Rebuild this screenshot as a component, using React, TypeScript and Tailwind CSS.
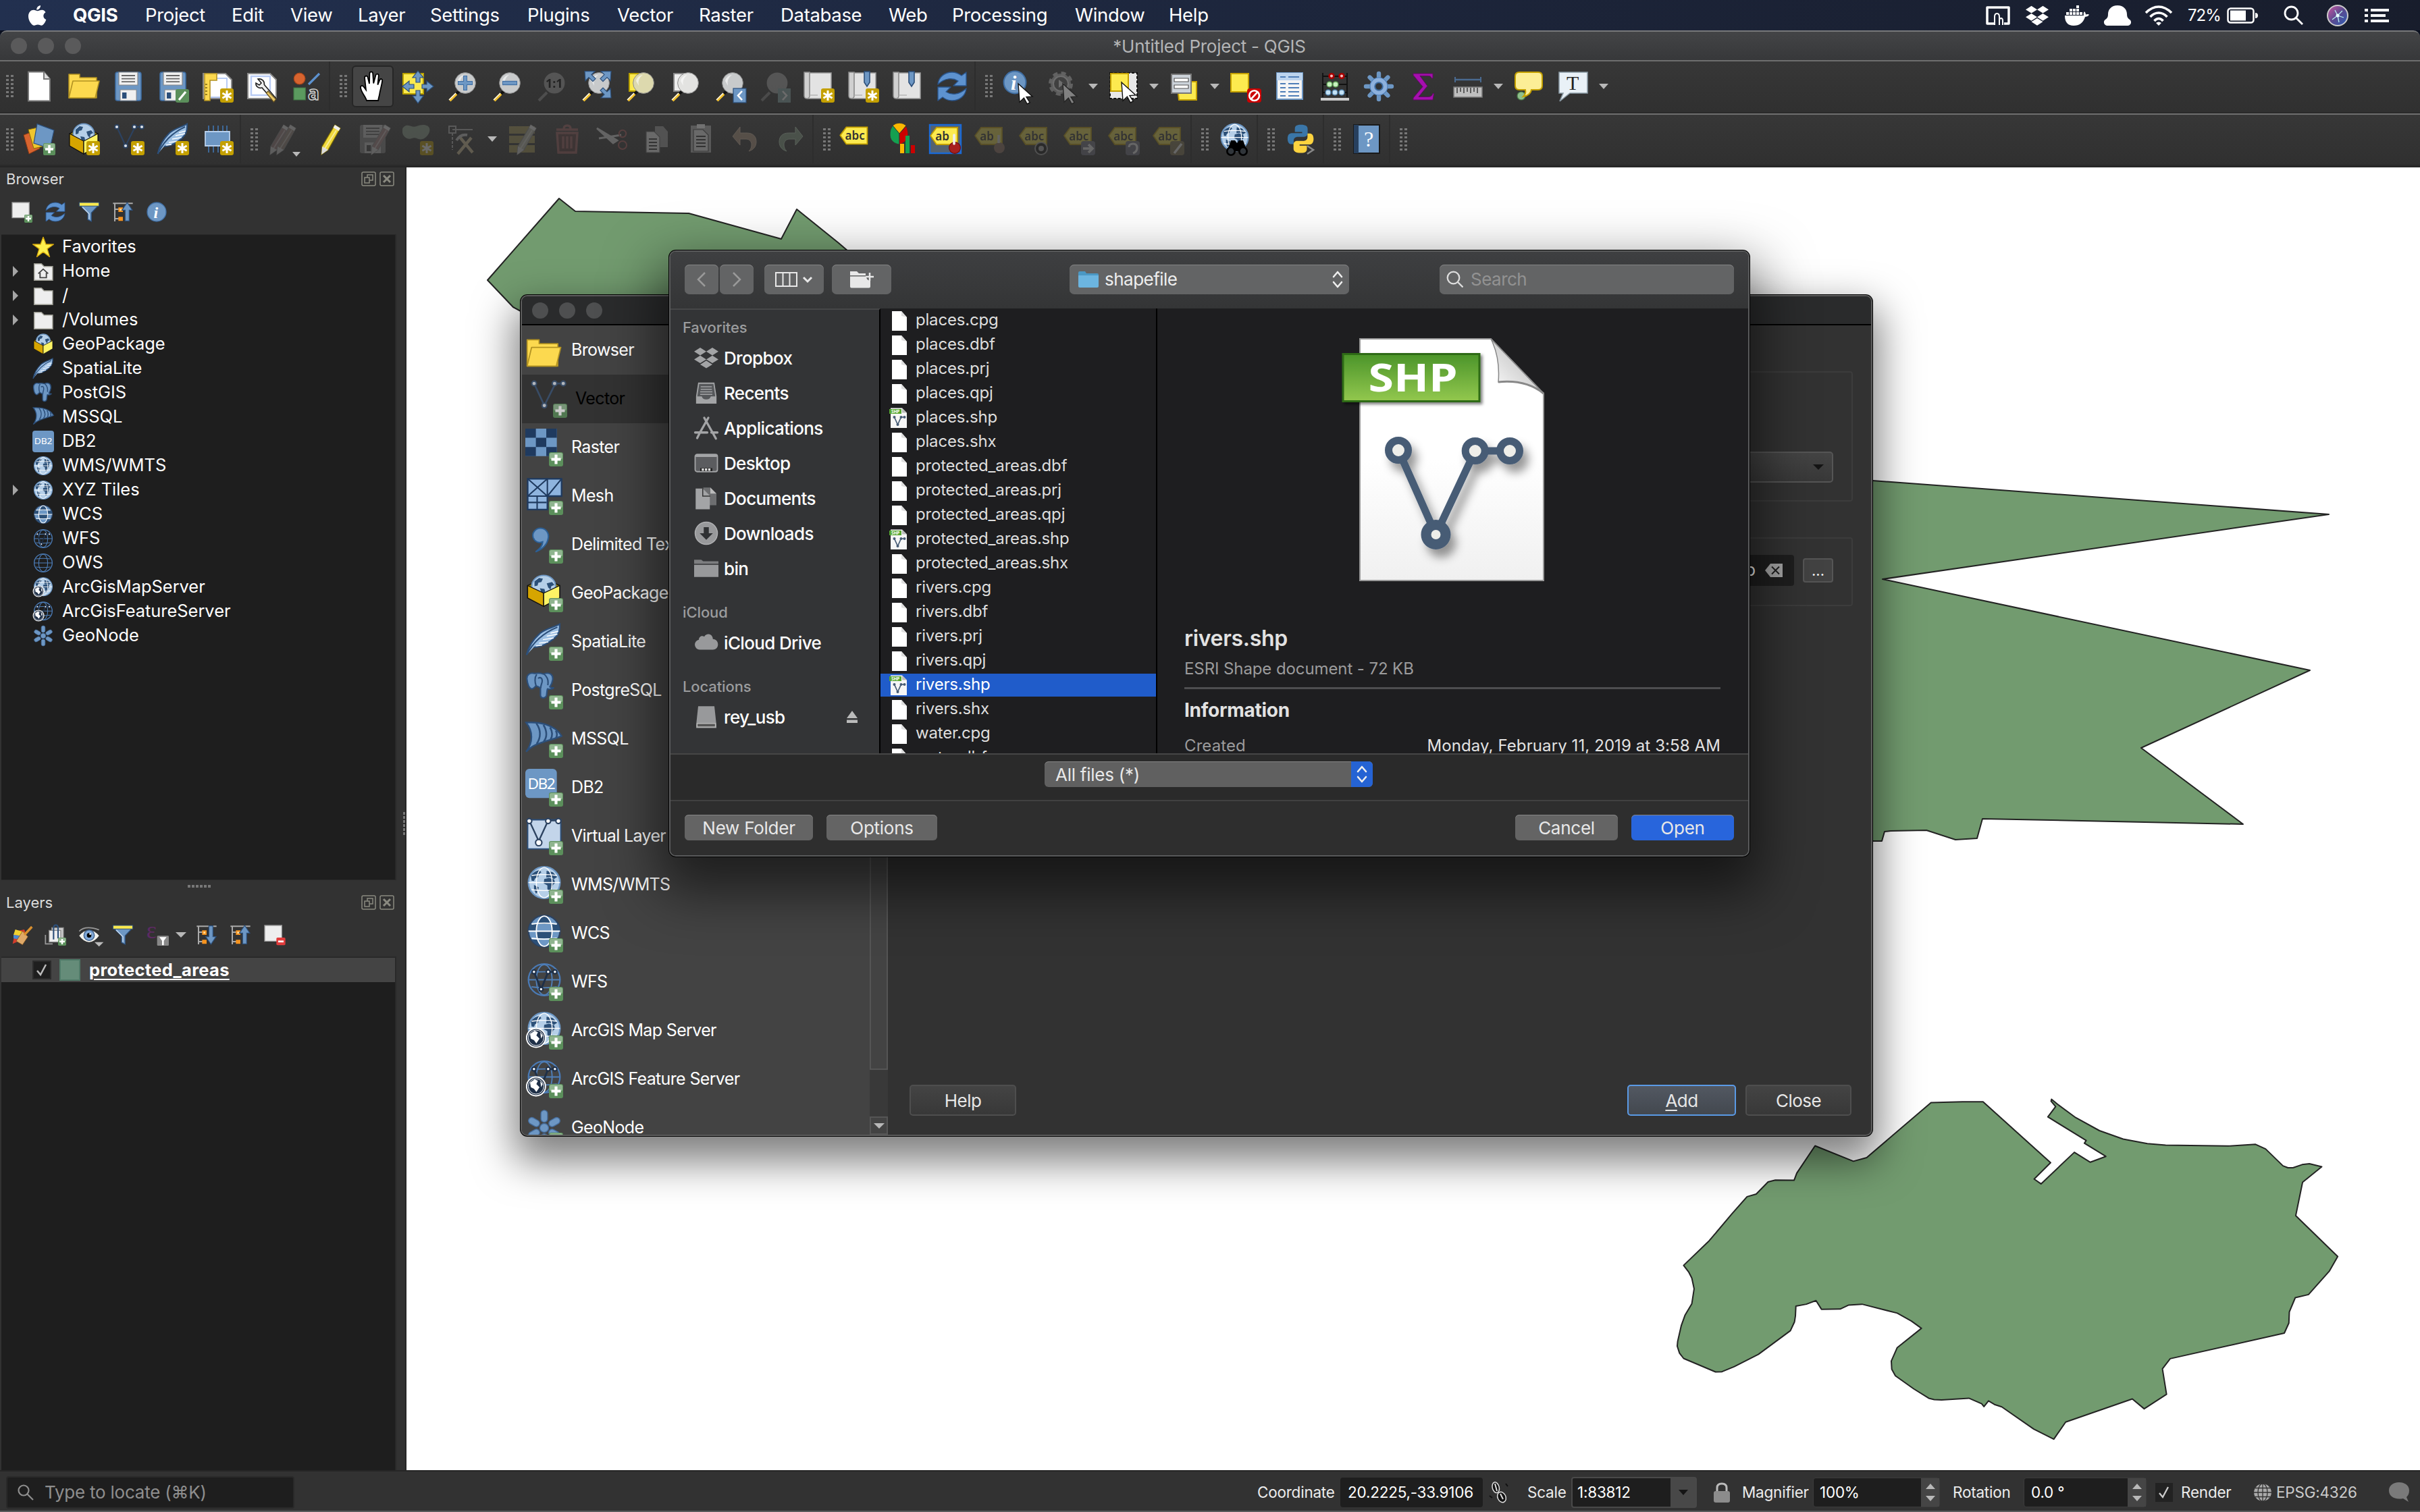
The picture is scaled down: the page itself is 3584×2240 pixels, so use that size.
import React from "react";

type P = { children?: React.ReactNode };

/* ---------- icon helpers ---------- */
const I = ({ children, c = "w-12 h-12", vb = "0 0 24 24" }: P & { c?: string; vb?: string }) => (
  <svg viewBox={vb} className={`shrink-0 overflow-visible ${c}`} fill="none">{children}</svg>
);
const Plus = () => (
  <g>
    <rect x="15" y="15" width="9" height="9" rx="1.3" fill="#5b8f5b" />
    <rect x="15.4" y="15.4" width="8.2" height="4" rx="1" fill="#8fb58f" />
    <path d="M19.5 16.5v6M16.5 19.5h6" stroke="#fff" strokeWidth="1.8" />
  </g>
);
const Star = () => (
  <g>
    <rect x="14" y="13.5" width="10" height="10.5" rx="1.6" fill="#c4a000" />
    <path d="M19 15v7.5M15.7 17l6.6 3.6M15.7 20.6l6.6-3.6" stroke="#fff" strokeWidth="1.5" />
  </g>
);
const Continents = () => (
  <g fill="#2c5078">
    <path d="M3.500 6c1.500-2 3.500-3 5.500-3.300l1.200 1.300-1.700 1.200-.3 1.800-2 .8-.7 1.700-1.500-.2z" />
    <path d="M12 8.300l3-.8 3.200 1 .8 2.200-1.500 1.300-1 3.500-1.300 1.500-1.200-2.500v-2.200l-2.300-1.300z" />
    <path d="M13.500 3l4 1 2.700 3-2 1.200-2.500-1.200-2.400.3z" />
    <path d="M5.500 12l3 1.500-.5 2.500-1.200 1.700-1.300-3z" />
  </g>
);
const GlobeG = ({ k = "wms" }: { k?: string }) => (
  <g>
    {k === "wms" && <><circle cx="12" cy="10.500" r="10" fill="#b5cfe8" stroke="#6d97c4" strokeWidth="1" /><Continents /></>}
    {k === "wcs" && (
      <>
        <circle cx="12" cy="10.500" r="10" fill="#6d97c4" stroke="#2c4260" strokeWidth="1" />
        <path d="M3 6a10 10 0 0 0-1 4.500h5.200q0-2.500.5-4.500zM16.300 6q.7 2 .7 4.500h5A10 10 0 0 0 21 6zM7.200 10.500h9.800q0 2.500-.7 4.500H7.800q-.6-2-.6-4.500zM4 16q3 4 6 4.300l-2.300-4.500zM20 16q-3 4-6 4.300l2.300-4.500z" fill="#2c5078" />
        <path d="M8 6q1.500-4.700 4-5 2.500.3 4 5z" fill="#2c5078" />
      </>
    )}
    {(k === "wfs" || k === "ows") && <circle cx="12" cy="10.500" r="10" stroke="#4a7ab5" strokeWidth="1" />}
    <g stroke={k === "wfs" || k === "ows" ? "#4f7fb8" : "#fff"} strokeWidth={k === "wms" ? ".6" : ".8"}>
      <ellipse cx="12" cy="10.500" rx="5" ry="9.600" />
      <path d="M2 10.500h20M4 6q8-1.200 16 0M4 15q8 1.200 16 0" />
    </g>
    {k === "wfs" && (
      <g>
        <path d="M5.500 5.500L10 16.500 14.500 5.500h4.300" stroke="#1f3048" strokeWidth="1.200" />
        <g fill="#fff" stroke="#1f3048" strokeWidth=".9"><circle cx="5.500" cy="5.500" r="1.200" /><circle cx="10" cy="16.500" r="1.200" /><circle cx="14.500" cy="5.500" r="1.200" /><circle cx="18.800" cy="5.500" r="1.200" /></g>
      </g>
    )}
  </g>
);
const ArcG = () => (
  <g>
    <circle cx="6.800" cy="16.500" r="6" fill="#1f3048" stroke="#fff" strokeWidth=".8" />
    <circle cx="6.800" cy="16.500" r="4.900" stroke="#fff" strokeWidth=".4" />
    <path d="M3 14l3-2 2 1-1 2 2 2-2 3-1.500-2-2-1zM9.500 13l1.500 2-1 2z" fill="#fff" />
  </g>
);
const GpkgG = () => (
  <g>
    <path d="M1.500 8L12 2.500 22.500 8v9L12 23 1.500 17z" fill="#8a7000" stroke="#111" strokeWidth=".6" />
    <circle cx="12" cy="8.500" r="7.800" fill="#b5cfe8" stroke="#6d97c4" strokeWidth=".9" />
    <path d="M6 5l3-2.500 2.500.5-1 2.500-2 .5-.5 2-2 .5zM14 6.500l3.500-1 1.500 2-2 1-.5 2.500-1.500-1.500zM9.500 10l3 .5.5 2-2 2z" fill="#2c5078" />
    <path d="M1.500 8L12 13.500V23L1.500 17z" fill="#d6a500" stroke="#111" strokeWidth=".6" />
    <path d="M22.500 8L12 13.500V23l10.500-6z" fill="#fcf465" stroke="#111" strokeWidth=".6" />
  </g>
);
const FeatherG = () => (
  <g>
    <path d="M.8 23C2 17 5 12 9.500 7.500 13.500 4 19 3 22.500.8c.3 4-.5 7.500-3.500 10.200-4 3.500-7.500 6-13.500 6.500" fill="#9dc0e4" stroke="#2c4f7a" strokeWidth="1" />
    <path d="M.8 23C5 14 12 7 21 3" stroke="#2c4f7a" strokeWidth="1" />
    <path d="M9 14.500l6-.8M11.500 12l7-1.200M14 9.500l7-1.500M16.500 7.300l5-1.300M7 16.500l4-.5" stroke="#fff" strokeWidth=".7" />
  </g>
);
const ElephantG = () => (
  <g fill="#6d97c4" stroke="#2c4f7a" strokeWidth="1.100" strokeLinejoin="round">
    <path d="M7 1.500C3.500.5 1 2.500 1.200 6c.3 3.500 1.500 7.500 3.300 8 1.300.4 2.500-1.500 3.500-2.500 1.500 1 2.800 1 3.300 2v6c.3 2.500 3.800 2.500 4.500 0 .4-2 .2-4 .8-5.500 1.500.5 3.500.2 4.500-.8-1 0-2.200-.1-2.800-.8C20.500 9 21.500 4 19 2c-2-1.300-4-.8-5.500 0-2-.8-4.500-.9-6.500-.5z" />
    <path d="M8 11.500C7 8 7 4.500 8.500 2.200M14 2c2 2 3.500 4 2.800 9M9.500 5.500c2-1.500 3.500 0 3 3-.3 1.500-1.200 3.500-.9 5" fill="none" />
  </g>
);
const SailG = () => (
  <g>
    <path d="M1 1.500c8-.5 18 1 22.500 8.500C17 13 7 13.500 1 20 5.500 14 5.500 7 1 1.500z" fill="#6d97c4" stroke="#2c4f7a" strokeWidth="1" />
    <path d="M7.500 2c3 4 3 9 .2 13M12 3c2.500 4 2.300 8 .2 10.500M16.200 4.500c1.700 3 1.700 5.500.3 7.800M19.800 6.700c1 1.500 1 3 .2 4.600" stroke="#2c4f7a" strokeWidth="1.100" />
  </g>
);
const VG = ({ s = "#2c4260" }: { s?: string }) => (
  <g>
    <path d="M3.500 3l6.500 14L17 3h5" stroke={s} strokeWidth="1.100" />
    <g fill="#dde3ea" stroke={s} strokeWidth=".9"><circle cx="3.500" cy="3" r="1.500" /><circle cx="10" cy="17" r="1.500" /><circle cx="16.500" cy="3" r="1.500" /><circle cx="22" cy="3" r="1.500" /></g>
  </g>
);
const NodeG = () => (
  <g stroke="#466d9c" strokeWidth=".6" fill="#6d97c4">
    {[0, 60, 120, 180, 240, 300].map((a) => (
      <rect key={a} x="9.900" y=".8" width="4.200" height="7.500" rx="2.100" transform={`rotate(${a} 12 12)`} />
    ))}
    <circle cx="12" cy="12" r="2.800" />
  </g>
);
const FolderY = () => (
  <g stroke="#b29222" strokeWidth=".8" fill="#fcd94f" strokeLinejoin="round">
    <path d="M1 20.500V3h8v2.500h12.500v15z" />
    <path d="M1 20.500L4 8h19.500l-3 12.500z" />
  </g>
);
const Lens = ({ f = "#c8cacb" }: { f?: string }) => (
  <g>
    <path d="M10 15.500l-2.500 2.500" stroke="#111" strokeWidth="2" />
    <path d="M8 17.500L3 22.500" stroke="#f2c12e" strokeWidth="2" />
    <path d="M7.500 17L2.500 22" stroke="#fff" strokeWidth=".6" />
    <circle cx="14.500" cy="9.500" r="7.700" fill={f} stroke="#8b8b8b" strokeWidth=".5" />
    <path d="M9 8a5.500 5.500 0 0 1 5-4.500 7 7 0 0 0-3 8z" fill="#fff" opacity=".6" />
  </g>
);
const Cursor = () => <path d="M12 10l10.500 9.500-4.500.3 2.600 4.200-2 1-2.400-4.400-3.200 3z" fill="#fff" stroke="#111" strokeWidth=".7" />;
const RefreshG = () => (
  <g fill="#5d92cf" stroke="#2a558c" strokeWidth=".7" strokeLinejoin="round">
    <path d="M1.500 10.500C2 5 6.500 1.500 12 1.500c3 0 5 1 7 2.500l3.500-2.500v10H13l3.500-3.500c-4-2.500-9.500-2.500-15 2.500z" />
    <path d="M22.500 13.500C22 19 17.500 22.500 12 22.500c-3 0-5-1-7-2.500l-3.500 2.500v-10H11l-3.500 3.500c4 2.500 9.500 2.500 15-2.500z" />
  </g>
);
const Roll = () => (
  <g>
    <path d="M4 2h17.500v19H4z" fill="#e3e3e3" stroke="#999" strokeWidth=".8" />
    <path d="M1.500 1.500h4V19a2 2 0 0 1-4 0z" fill="#d0d0d0" stroke="#8a8a8a" strokeWidth=".8" />
    <path d="M5.500 18.500h6" stroke="#aaa" strokeWidth=".6" />
  </g>
);
const Ribbon = () => <path d="M13 1h4v8l-2 3-2-3z" fill="#6d97c4" stroke="#2c4f7a" strokeWidth=".8" />;
const Tag = ({ t = "abc" }: { t?: string }) => (
  <g>
    <path d="M1 9.500L5.500 3.500H21v12.500H5.500z" fill="#fcea4f" stroke="#c4a000" strokeWidth=".9" />
    <text x="4.600" y="12.800" fontSize="8.500" fontFamily="Noto Sans" fontWeight="600" fill="#333">{t}</text>
  </g>
);
const Pencil = ({ x = 0, f = "#efd83b", s = "#7d6c00" }: { x?: number; f?: string; s?: string }) => (
  <g transform={`translate(${x} 0)`}>
    <path d="M15 1.500l4 2.500L10 20l-5 3.500.5-6z" fill={f} stroke={s} strokeWidth=".6" />
    <path d="M15 1.500l4 2.500-1.200 2-4-2.500z" fill="#eee" />
    <path d="M5.600 17.500L10 20l-5 3.500z" fill="#ddd" />
    <path d="M16 5.500L7.500 19" stroke="#fff" strokeWidth=".9" opacity=".5" />
  </g>
);
const Floppy = () => (
  <g>
    <rect x="2.500" y="1.500" width="19" height="21" rx="1.500" fill="#6d97c4" stroke="#3f6ea3" strokeWidth=".8" />
    <path d="M5 1.500h14v9.500H5z" fill="#f0f0f0" stroke="#888" strokeWidth=".6" />
    <path d="M7 4h10M7 6.300h10M7 8.600h10" stroke="#666" strokeWidth=".9" />
    <path d="M6 14.500h12v8H6z" fill="#f0f0f0" stroke="#888" strokeWidth=".5" />
    <path d="M7.500 16.500h3.200v4.500H7.500z" fill="#2c4f7a" />
  </g>
);
const FloppyGray = () => (
  <g>
    <rect x="2.500" y="1.500" width="19" height="21" rx="1.500" fill="#888" />
    <path d="M5 1.500h14v9.500H5z" fill="#ccc" />
    <path d="M7 4h10M7 6.300h10M7 8.600h10" stroke="#555" strokeWidth=".9" />
    <path d="M6 14.500h12v8H6z" fill="#ccc" />
    <path d="M7.500 16.500h3.200v4.500H7.500z" fill="#444" />
  </g>
);
const TreeG = ({ up }: { up?: boolean }) => (
  <g>
    <path d="M1 2.500h22M3 2.500v20M3 9h6M3 19.500h6" stroke="#aaa" strokeWidth="1.500" />
    <path d="M7 7h5v5H7zM7 17.500h5v4.500H7z" fill="#f7931e" />
    <path d="M8.500 8.500h2v2h-2z" fill="#ffe0a0" />
    {up
      ? <path d="M14.500 22V10H11l5.800-8.500L22.500 10H19v12z" fill="#6d97c4" stroke="#2c4f7a" strokeWidth=".9" />
      : <path d="M14.500 2v12H11l5.800 8.500L22.500 14H19V2z" fill="#6d97c4" stroke="#2c4f7a" strokeWidth=".9" />}
  </g>
);
const FunnelG = () => (
  <g>
    <path d="M1.500 4.500h21L14.500 13v9.500l-4-2V13z" fill="#6d97c4" stroke="#2c4f7a" strokeWidth=".9" />
    <path d="M1 1.500h22v4H1z" fill="#fcea4f" stroke="#2c4f7a" strokeWidth=".8" />
    <path d="M4.500 6.500L12 14v6" stroke="#cfe0f3" strokeWidth="1" />
  </g>
);
const InfoG = () => (
  <g>
    <circle cx="12" cy="12" r="10.500" fill="#6d97c4" stroke="#3f6ea3" />
    <text x="8.700" y="18.500" fontSize="18" fontFamily="Liberation Serif" fontWeight="700" fontStyle="italic" fill="#fff">i</text>
  </g>
);
const DropboxG = ({ f }: { f: string }) => (
  <path fill={f} d="M6 2l6 3.800-6 3.800-6-3.800zM18 2l6 3.800-6 3.800-6-3.800zM6 9.800l6 3.800-6 3.800-6-3.800zM18 9.800l6 3.800-6 3.800-6-3.800zM12 14.800l6 3.800-6 3.800-6-3.800z" />
);

const icons: Record<string, React.ReactNode> = {
  new: <><path d="M4 1.300h11.500L20 6.500v16.200H4z" fill="#fff" stroke="#777" strokeWidth="1" /><path d="M15.500 1.300V6.500H20" fill="#ddd" stroke="#777" /></>,
  open: <FolderY />,
  save: <Floppy />,
  saveas: <><Floppy /><rect x="14" y="14" width="10" height="10" rx="1.500" fill="#5b8f5b" /><path d="M21.500 16l-5 6" stroke="#fff" strokeWidth="1.600" /></>,
  layout: <><path d="M1.500 2.500H18l4.500 4.500v14H1.500z" fill="#fff" stroke="#888" /><path d="M5 6h14v14H7" stroke="#b9ccf5" /><path d="M2.500 2.500h9v5h-5v15h-4z" fill="#fcd94f" stroke="#b29222" strokeWidth=".8" /><path d="M3 10.500h1.500M3 13h1.500M3 15.500h1.500M3 18h1.500" stroke="#7a6410" strokeWidth=".8" /><Star /></>,
  layoutmgr: <><path d="M1.500 2.500H18l4.500 4.500v14H1.500z" fill="#fff" stroke="#888" /><path d="M4 4.500h14v14H4z" stroke="#b9ccf5" strokeWidth="1.200" /><path d="M9 6.500c3-.5 5 1.500 4.700 4.200L22.500 21l-1.800 2L12 13c-2.500.8-4.800-1-4.500-3.500l2.500 1.500 1.500-1.500z" fill="#eee" stroke="#222" strokeWidth=".8" /><path d="M16.500 15.500l5.800 6-1.600 2-5.500-6.500z" fill="#e8c766" stroke="#6b5520" strokeWidth=".6" /></>,
  style: <><circle cx="6.800" cy="6.300" r="4.200" fill="#d7642f" stroke="#a3441a" strokeWidth=".6" /><path d="M21.500 2.500l-8 8" stroke="#5d92cf" strokeWidth="1.600" /><path d="M2.500 13h8.700v9H2.500z" fill="#5b9a5f" stroke="#3f7343" strokeWidth=".6" /><text x="13" y="21.800" fontSize="14" fontFamily="Noto Sans" fontWeight="700" fill="#222" stroke="#ccc" strokeWidth=".8">a</text></>,
  hand: <path d="M7.500 22.500C6.500 19 3 16 3 12.500c0-1.300 1.800-1.300 2.500 0l1.500 2L6 5.500c0-1.500 2-1.700 2.300-.3L9.500 10l.2-7.500c.1-1.700 2.300-1.700 2.400 0l.5 7.200 1.600-6c.4-1.400 2.300-1.100 2.200.4l-.7 6.700 1.500-3.600c.6-1.200 2.100-.7 1.900.6-.5 4-1.600 6.700-2 9.700-.3 2-1 3.500-1 5z" fill="#fff" stroke="#000" strokeWidth=".9" />,
  pan: <><path d="M1.500 2.500h15v15h-15z" fill="#fcea4f" stroke="#b8a000" /><g fill="#6d97c4" stroke="#2c4f7a" strokeWidth=".6"><path d="M12.500.5l4 5h-2.500V9h-3V5.500H8.500zM12.500 24.500l4-5.500h-2.500V15h-3v4H8.500zM1 12l5-4v2.500h3.500v3H6V16zM24 12l-5-4v2.500h-3.500v3H19V16z" /></g></>,
  zin: <><Lens /><path d="M14.500 4v11M9 9.500h11" stroke="#3f6ea3" strokeWidth="3" /><path d="M14.500 4.500v10M9.500 9.500h10" stroke="#6d97c4" strokeWidth="2" /></>,
  zout: <><Lens /><path d="M9 9.500h11" stroke="#3f6ea3" strokeWidth="3.200" /><path d="M9.500 9.500h10" stroke="#6d97c4" strokeWidth="2" /></>,
  z11: <g opacity=".32"><path d="M9 16.500L3 22.500" stroke="#888" strokeWidth="2" /><circle cx="14.500" cy="9.500" r="7.700" fill="#999" /><text x="8" y="13" fontSize="9" fontFamily="Noto Sans" fontWeight="700" fill="#000">1:1</text></g>,
  zfull: <><Lens /><g fill="#6d97c4" stroke="#2c4f7a" strokeWidth=".6"><path d="M4 .8h7.500L9 3.300l3 3-2 2-3-3-2.500 2.500zM23.500.8H16l2.500 2.500-3 3 2 2 3-3 2.500 2.500zM23.500 20.500H16L18.500 18l-3-3 2-2 3 3 2.500-2.500z" /></g></>,
  zsel: <><path d="M4 2.500h13v13H4z" fill="#fcea4f" stroke="#b8a000" /><Lens f="#ddd9ae" /></>,
  zlay: <><path d="M4 2.500h13v13H4z" fill="#eee" stroke="#888" /><Lens f="#e3e3e1" /></>,
  zlast: <><Lens /><rect x="15" y="13.500" width="9.500" height="10.500" fill="#6d97c4" stroke="#2c4f7a" strokeWidth=".6" /><path d="M21.500 15.500l-3 3.300 3 3.300" stroke="#fff" strokeWidth="1.300" /></>,
  znext: <g opacity=".28"><path d="M9 16.500L3 22.500" stroke="#888" strokeWidth="2" /><circle cx="14.500" cy="9.500" r="7.700" fill="#aaa" /><rect x="15" y="13.500" width="9.500" height="10.500" fill="#8aa" /><path d="M18.500 15.500l3 3.300-3 3.300" stroke="#fff" strokeWidth="1.300" /></g>,
  mapnew: <><Roll /><Star /></>,
  bmnew: <><Roll /><Ribbon /><Star /></>,
  bm: <><Roll /><Ribbon /></>,
  refresh: <RefreshG />,
  identify: <><circle cx="9.500" cy="9" r="8.200" fill="#6d97c4" stroke="#3f6ea3" /><text x="6.500" y="14.500" fontSize="15" fontFamily="Liberation Serif" fontWeight="700" fontStyle="italic" fill="#fff">i</text><Cursor /></>,
  action: <g opacity=".38"><circle cx="10.500" cy="10" r="7.500" fill="#999" stroke="#aaa" strokeWidth="3" strokeDasharray="3.300 2.600" /><circle cx="10.500" cy="10" r="5.500" fill="#555" stroke="#ccc" /><path d="M9 7l4 3-4 3z" fill="#ccc" /><Cursor /></g>,
  select: <><path d="M2 2h20v19H2z" fill="#e8e8e8" stroke="#111" strokeDasharray="2 1.200" /><path d="M2.500 2.500h13v13h-13z" fill="#fcea4f" stroke="#c4a000" /><g transform="translate(-1.500 -1)"><Cursor /></g></>,
  form: <><path d="M6.500 8.500H21v13.500H8z" fill="#fcea4f" stroke="#c4a000" /><path d="M2.500 3h14.500v14H2.500z" fill="#ccd3da" stroke="#777" /><path d="M4.500 6h10.500v2.500H4.500zM4.500 11h10.500v2.500H4.500z" fill="#fff" stroke="#555" strokeWidth=".6" /></>,
  desel: <><path d="M1.500 2.500h13v13.500h-13z" fill="#fcea4f" stroke="#c4a000" /><rect x="13.500" y="13.500" width="10.500" height="10.500" rx="2" fill="#c00" /><circle cx="18.800" cy="18.800" r="3.700" fill="#c00" stroke="#fff" strokeWidth="1.300" /><path d="M16.300 21.500l5-5.400" stroke="#fff" strokeWidth="1.300" /></>,
  table: <><path d="M2.500 2h19v19.500h-19z" fill="#f5f5f5" stroke="#6d97c4" strokeWidth="1" /><path d="M2.500 2h19v5.500h-19z" fill="#bcd4ee" /><path d="M5 5h4M11 5h8M5 10h4M11 10h8M5 13h4M11 13h8M5 16h4M11 16h8M5 19h4M11 19h8" stroke="#4f7fb8" strokeWidth="1.100" /></>,
  abacus: <><path d="M3.500 2v18M21.500 2v18M3.500 4.500h18M3.500 10.500h18M3.500 16.500h18" stroke="#111" strokeWidth=".9" /><path d="M2 21.500h21" stroke="#ccc" strokeWidth="2" /><g strokeWidth=".7"><g fill="#f6c0c0" stroke="#a00" strokeWidth="1.300"><circle cx="10" cy="4.300" r="1.700" /><circle cx="17.500" cy="4.300" r="1.700" /></g><g fill="#c8f0c0" stroke="#5a9a50"><circle cx="8.500" cy="10.500" r="2" /><circle cx="13" cy="10.500" r="2" /></g><g fill="#c4e2f5" stroke="#4f7fa8"><circle cx="7.500" cy="16.500" r="2" /><circle cx="12.500" cy="16.500" r="2" /><circle cx="17.500" cy="16.500" r="2" /></g></g></>,
  gear: <><g stroke="#6d97c4" strokeWidth="3.200" strokeLinecap="round"><path d="M12 2.500v19M2.500 12h19M5.300 5.300l13.400 13.400M18.700 5.300L5.300 18.700" /></g><circle cx="12" cy="12" r="6.500" fill="#8db1dd" stroke="#4f7fb8" strokeWidth=".6" /><circle cx="12" cy="12" r="2.900" fill="#2f3336" stroke="#3f6ea3" /></>,
  sigma: <path d="M4.500 2.500H19V6h-1c-.3-1.500-1-1.800-3-1.800H9.500l5.500 7.500-6.500 8H15c2.500 0 3.300-.5 4-2.500h.8L19 22H4.500v-1.500l7-8.300-7-8.500z" fill="#a60fae" stroke="#5e0a63" strokeWidth=".5" />,
  ruler: <><path d="M2.500 7h19" stroke="#4a6a90" strokeWidth="1.200" /><path d="M2.500 5v4M21.500 5v4" stroke="#4a6a90" /><path d="M1.500 12.500h21v7.500h-21z" fill="#bfbfbf" stroke="#777" strokeWidth=".8" /><path d="M4 13v4M6.500 13v3M9 13v4M11.500 13v3M14 13v4M16.500 13v3M19 13v4" stroke="#444" strokeWidth=".8" /></>,
  tip: <><circle cx="6.500" cy="19" r="3" fill="#8fbf8b" stroke="#4d7d4a" strokeWidth=".6" /><path d="M5 1.500h14q3 0 3 3v7q0 3-3 3h-5c-.5 3-3 4.500-6 5 1.500-1.500 2-3 1.500-5H5q-3 0-3-3v-7q0-3 3-3z" fill="#fcee96" stroke="#c4a000" /></>,
  textan: <><path d="M1.500 1.500h21V17H9.500L2 23l2.500-6h-3z" fill="#e9f1f7" stroke="#8a9aa5" strokeWidth=".8" /><text x="7" y="14.500" fontSize="15" fontFamily="Liberation Serif" fill="#222">T</text></>,
  ds: <><path d="M.5 9l8-3 4 13-8 4z" fill="#d7642f" stroke="#8c3a14" strokeWidth=".5" /><path d="M4 5l9-2 4 14-9 2z" fill="#f0c52e" stroke="#8a7000" strokeWidth=".5" /><path d="M10.500.8L23 5.500 20 19l-12-4z" fill="#6d97c4" stroke="#2c4f7a" strokeWidth=".6" /><Plus /></>,
  gpkgnew: <><GpkgG /><Star /></>,
  vnew: <><VG /><Star /></>,
  feathernew: <><FeatherG /><Star /></>,
  virtnew: <><path d="M5.500 2v20M9 2v20M12.500 2v20M16 2v20M19 2v20" stroke="#3f6ea3" strokeWidth=".9" /><path d="M3 6.500h18v10.500H3z" fill="#6d97c4" stroke="#b8d0ec" strokeWidth=".9" /><Star /></>,
  pencils: <g opacity=".25"><Pencil x={-3} f="#a08080" s="#888" /><Pencil x={2} f="#a08c80" s="#888" /></g>,
  pencil: <Pencil x={2} />,
  saveedit: <g opacity=".27"><FloppyGray /><Pencil x={6} f="#a88" s="#888" /></g>,
  poly: <g opacity=".27"><path d="M2 3c3-3 6 1 9.500-.5S20 1 21 4s-2 7-5 8-5-2-8-.5S1 10 1 7s0-3 1-4z" fill="#8ca08c" /><Star /></g>,
  nodes: <g opacity=".3"><path d="M2.500 2.500h5v5h-5zM5 5h15" stroke="#aaa" /><path d="M5 7.500V20" stroke="#aaa" strokeDasharray="2 1" /><path d="M10 10l10 12M19 11L9 23" stroke="#c8b890" strokeWidth="2.200" /><path d="M8 13q3-5 8-4" stroke="#bbb" strokeWidth="2" /></g>,
  multi: <g opacity=".27"><path d="M2 2.500h19v5.500H2zM2 9.500h19v5.500H2zM2 16.500h19v5.500H2z" fill="#a89a55" /><Pencil x={3} f="#bba" s="#888" /></g>,
  trash: <g opacity=".27" stroke="#a06060" strokeWidth="1.700"><path d="M4.500 7.500h15L18.500 22h-13z" fill="#5a3838" /><path d="M9 10v9M12 10v9M15 10v9M4 5h16M9.500 4.500q0-2.500 2.500-2.500t2.500 2.500" /></g>,
  cut: <g opacity=".4"><path d="M1 4l15 9-3 2zM2.500 11.500L19 9" stroke="#aaa" strokeWidth="1.400" fill="#aaa" /><circle cx="20" cy="8" r="2.600" stroke="#8a5050" strokeWidth="1" /><circle cx="20" cy="16.500" r="3" stroke="#8a5050" strokeWidth="1" /></g>,
  copy: <g opacity=".45"><path d="M11 2.500h6l3.500 4V18H11z" fill="#777" /><path d="M4.500 6.500h6l4 4v11.500h-10z" fill="#aaa" stroke="#555" strokeWidth=".6" /><path d="M6.500 12h6M6.500 14.500h6M6.500 17h6M6.500 19.500h6" stroke="#333" /></g>,
  paste: <g opacity=".45"><path d="M4.500 2h15v20h-15z" fill="#888" /><path d="M6.500 5h7l4 4v12h-11z" fill="#aaa" stroke="#444" strokeWidth=".6" /><path d="M8.500 10h7M8.500 12.500h7M8.500 15h7M8.500 17.500h7" stroke="#333" /><path d="M9 1h6v3H9z" fill="#bbb" /></g>,
  undo: <path opacity=".4" d="M8 3v4.500h5c5 0 7 3 7 6.500s-2 6-5.500 7c1.500-1.500 2-3 2-5s-1.500-4-4-4H8V16.500L2.500 10z" fill="#8a7868" stroke="#a09080" strokeWidth=".5" />,
  redo: <path opacity=".4" d="M16 3v4.500h-5c-5 0-7 3-7 6.500s2 6 5.500 7c-1.500-1.500-2-3-2-5s1.500-4 4-4H16V16.500L21.500 10z" fill="#6b7d6b" stroke="#90a090" strokeWidth=".5" />,
  label: <g transform="translate(-.800 -.300)"><Tag /></g>,
  diagram: <><path d="M11 8L6 2a7.500 7.500 0 0 1 10 0z" fill="#fbb800" stroke="#333" strokeWidth=".4" /><path d="M11 8v8C5 15 3 11 4.500 5L6 2z" fill="#14a050" stroke="#333" strokeWidth=".4" /><path d="M11 8v8c6-1.500 8-7 5-13.500z" fill="#c00" stroke="#333" strokeWidth=".4" /><path d="M11.500 15.500h3v7h-3z" fill="#fbb800" /><path d="M15.500 9.500h3v13h-3z" fill="#14a050" /><path d="M19.500 16.500h3v6h-3z" fill="#c00" /></>,
  tagon: <><rect x=".5" y="1.500" width="23" height="21" fill="#55626f" stroke="#1a6ad8" strokeWidth="1.200" /><Tag t="ab" /><circle cx="19" cy="18.500" r="4.200" fill="#a8201e" stroke="#6e0f0f" strokeWidth=".6" /><path d="M18.500 9v6.500" stroke="#eee" strokeWidth="1.800" strokeLinecap="round" /></>,
  tag1: <g opacity=".25"><Tag t="ab" /><circle cx="19" cy="18.500" r="4" fill="#976" /><path d="M18.500 9v6" stroke="#eee" strokeWidth="1.800" /></g>,
  tag2: <g opacity=".25"><Tag /><circle cx="17" cy="19" r="4.500" fill="#111" stroke="#aaa" /><circle cx="17" cy="19" r="2" fill="#bbb" /></g>,
  tag3: <g opacity=".25"><Tag /><rect x="13.500" y="13.500" width="10.500" height="10.500" rx="2" fill="#778" /><path d="M15 19h7M19 16l3 3-3 3" stroke="#fff" strokeWidth="1.800" /></g>,
  tag4: <g opacity=".25"><Tag /><rect x="13.500" y="13.500" width="10.500" height="10.500" rx="2" fill="#778" /><path d="M16 18q0-2.500 3-2.500t3 3-3 4" stroke="#fff" strokeWidth="1.600" /></g>,
  tag5: <g opacity=".25"><Tag /><rect x="13.500" y="13.500" width="10.500" height="10.500" rx="2" fill="#887a55" /><path d="M22 15.500l-5.500 7" stroke="#fff" strokeWidth="1.800" /></g>,
  meta: <><g transform="translate(.3 .3)"><GlobeG /></g><g fill="#000"><path d="M9.500 13h3l1.500 2 1.500-2h3l3 8H6.500z" /><circle cx="9.500" cy="21" r="3.500" /><circle cx="18.500" cy="21" r="3.500" /><circle cx="9.500" cy="21" r="2.200" fill="#30353a" /><circle cx="18.500" cy="21" r="2.200" fill="#30353a" /></g></>,
  python: <><path d="M11.500 1.500c-4 0-5 1.200-5 3.500v2.500h6v1H4c-2.500 0-3.500 2-3.500 4.500s1 4.500 3 4.500h2v-2.800c0-2 1.500-3.200 3.500-3.200h5c1.800 0 3-1.200 3-3V5c0-2.300-1.500-3.500-5.500-3.500z" fill="#3a76a8" transform="translate(2 0) scale(.9)" /><path d="M12.500 22.500c4 0 5-1.200 5-3.500v-2.500h-6v-1H20c2 0 3-2 3-4.500S22 6.500 20 6.500h-2v3c0 2-1.500 3.200-3.500 3.200h-5c-1.800 0-3 1.200-3 3V19c0 2.300 2 3.500 6 3.500z" fill="#fdd33f" transform="translate(1 2) scale(.9)" /><path d="M17 17l4.500 3-4.500 3" stroke="#888" strokeWidth="1.300" /></>,
  help: <><path d="M2.500 1.500h19v21h-19z" fill="#6d97c4" stroke="#1a1a1a" strokeWidth="1" /><path d="M2.500 1.500H6v21H2.500z" fill="#27405f" /><text x="10" y="17.500" fontSize="16" fontFamily="Liberation Serif" fill="#fff">?</text></>,
  /* dock toolbars and tree */
  addlayer: <><path d="M1.500 1.500h19v17h-19z" fill="#eee" stroke="#999" /><Plus /></>,
  filter: <FunnelG />,
  collapse: <TreeG up />,
  expand: <TreeG />,
  info: <InfoG />,
  brush: <><path d="M2 22l3-14 10-2 3 9z" fill="#d43c2c" /><path d="M5 6l10 3-4 4-8-1z" fill="#f2d230" /><path d="M3 12l7 1-1 4-6-1z" fill="#4a88d0" /><path d="M13 8l6 6-6 9-7-4z" fill="#dfa968" stroke="#7a4b16" strokeWidth=".5" /><path d="M15 12l8.500-9" stroke="#d9902f" strokeWidth="2.600" /></>,
  group: <><path d="M1 12v10h8" stroke="#999" strokeWidth="1.300" /><path d="M8 4h13v14H8z" fill="#ccc" stroke="#888" /><path d="M5 7h13v13H5z" fill="#eee" stroke="#888" /><path d="M10 17V5q0-4 2.500-4T15 5v11" stroke="#2c4f7a" strokeWidth="1.600" /><Plus /></>,
  eye: <><path d="M1 13Q6 7 12 7t11 6q-5 7-11 7T1 13z" fill="#f3f3ee" /><circle cx="12" cy="12.500" r="5.800" fill="#7fa8d8" stroke="#3c5f8c" /><circle cx="12" cy="12.500" r="2.500" fill="#000" /><circle cx="13.200" cy="11" r="1" fill="#fff" /><path d="M1 8Q8 1 23 6.500" stroke="#999" strokeWidth="1.300" /><path d="M18 20h10l-5 5z" fill="#bbb" /></>,
  eps: <><text x="-1" y="16" fontSize="27" fontFamily="Liberation Serif" fill="#5c2a63">ε</text><rect x="11" y="13" width="13" height="11" rx="1" fill="#888" /><path d="M13.500 14.500h8l-3 4v5h-2v-5z" fill="#fff" /></>,
  remove: <><path d="M1.500 1.500h19v17.500h-19z" fill="#eee" stroke="#999" /><rect x="14.500" y="15" width="10" height="8.500" rx="1.300" fill="#e03c3c" /><path d="M16.500 19.300h6" stroke="#fff" strokeWidth="2" /></>,
  star: <path d="M12 1l3 8h8.500l-7 5 2.600 8.800L12 17.500 4.900 22.800 7.500 14l-7-5H9z" fill="#fdf04e" stroke="#d6a90d" strokeWidth="1" strokeLinejoin="round" />,
  folder: <path d="M2 22V3.500h8l3 3h9.500V22z" fill="#eee" stroke="#99998f" strokeWidth="1.100" />,
  home: <><path d="M2 22V3.500h8l3 3h9.500V22z" fill="#eee" stroke="#99998f" strokeWidth="1.100" /><path d="M6.500 14.500L12 9.500l5.500 5M8.500 13.500v5.500h7v-5.500" stroke="#444" strokeWidth="1.400" /></>,
  gpkg: <GpkgG />,
  feather: <FeatherG />,
  pg: <ElephantG />,
  sail: <SailG />,
  db2s: <><rect width="24" height="24" rx="3" fill="#6d97c4" /><text x="2" y="15" fontSize="9" fontFamily="Noto Sans" textLength="20" lengthAdjust="spacingAndGlyphs" fill="#fff">DB2</text></>,
  wms: <g transform="translate(0 1.500)"><GlobeG /></g>,
  wcs: <g transform="translate(0 1.500)"><GlobeG k="wcs" /></g>,
  wfs: <g transform="translate(0 1.500)"><GlobeG k="wfs" /></g>,
  ows: <g transform="translate(0 1.500)"><GlobeG k="ows" /></g>,
  arcm: <><g transform="translate(0 1)"><GlobeG /></g><ArcG /></>,
  arcf: <><g transform="translate(0 1)"><GlobeG k="wfs" /></g><ArcG /></>,
  node: <NodeG />,
  /* data source list */
  dbrowser: <g transform="translate(.200 2.500) scale(.95)"><FolderY /></g>,
  dvector: <g opacity=".75"><g transform="translate(-.500 -.800)"><VG s="#3a5578" /></g><Plus /></g>,
  draster: <><path d="M0 0h20v17.500H0z" fill="#6d97c4" /><path d="M0 0h6.700v5.800H0zM13.300 0H20v5.800h-6.700zM6.700 5.800h6.600v5.900H6.700zM0 11.700h6.700v5.800H0zM13.300 11.700H20v5.800h-6.700z" fill="#1f3a5f" /><Plus /></>,
  dmesh: <><path d="M1.500 1h21.500v11H14v8.500H1.500z" fill="#8fb4de" stroke="#1f3a5f" strokeWidth="1" /><path d="M1.500 12H14V1M1.500 1L14 12M14 1L1.500 12M23 1l-9 11M1.500 16h12M7.500 12v8.500" stroke="#1f3a5f" strokeWidth=".9" /><Plus /></>,
  ddelim: <><path d="M5 7.500C4 4.500 6.500 1.500 9.500 1.500c3.500 0 5.800 3 5 6.500-.8 4.500-4 7-8 8.500 3-2 4.500-4 4.500-6.300-2.500 1-5 0-6-2.700z" fill="#6d97c4" stroke="#2c5f95" strokeWidth=".9" /><Plus /></>,
  dgpkg: <><g transform="scale(.97 .88)"><GpkgG /></g><Plus /></>,
  dfeather: <><g transform="scale(.97 .88)"><FeatherG /></g><Plus /></>,
  dpg: <><g transform="scale(.85 .78)"><ElephantG /></g><Plus /></>,
  dsail: <><g transform="translate(-.500 0)"><SailG /></g><Plus /></>,
  ddb2: <><rect width="20" height="18.500" rx="2.500" fill="#6d97c4" /><text x="1.500" y="13" fontSize="9.500" fontFamily="Noto Sans" textLength="17" lengthAdjust="spacingAndGlyphs" fill="#fff">DB2</text><Plus /></>,
  dvirt: <><path d="M1.500 1.500h21v18.500h-21z" fill="#c3d5ea" stroke="#2c4f7a" strokeWidth=".8" /><path d="M2.500 2l6 13 6-13h7" stroke="#2c4260" /><g fill="#fff" stroke="#2c4260" strokeWidth=".9"><circle cx="2.500" cy="2.300" r="1.600" /><circle cx="14.500" cy="2.300" r="1.600" /><circle cx="21" cy="2.300" r="1.600" /><circle cx="8.500" cy="16" r="2" /></g><Plus /></>,
  dwms: <><GlobeG /><Plus /></>,
  dwcs: <><GlobeG k="wcs" /><Plus /></>,
  dwfs: <><GlobeG k="wfs" /><Plus /></>,
  darcm: <><GlobeG /><ArcG /><Plus /></>,
  darcf: <><GlobeG k="wfs" /><ArcG /><Plus /></>,
  dnode: <><NodeG /><Plus /></>,
  /* file panel sidebar */
  sdrop: <DropboxG f="#a3a4a6" />,
  srec: <><path d="M4.500 2.500h15l2 13V22h-19v-6.500z" stroke="#a3a4a6" strokeWidth="1.200" fill="#55575a" /><path d="M2.500 15.500h5q1 3 4.500 3t4.500-3h5V22h-19z" fill="#a3a4a6" /><path d="M6.500 6h11M6.500 8.500h11M6 11h12M6 13.500h12" stroke="#a3a4a6" strokeWidth="1" /></>,
  sapp: <path d="M10 2l9 16 2.500 4.500M14 2L5.500 17 3 22M1 16.500h12M17 16.500h6" stroke="#a3a4a6" strokeWidth="2.200" strokeLinecap="round" />,
  sdesk: <><rect x="1" y="3.500" width="22" height="17" rx="2" fill="#5b5c5f" stroke="#a3a4a6" strokeWidth="1.200" /><path d="M1.500 5h21" stroke="#a3a4a6" strokeWidth="2" /><path d="M6 18.500h12" stroke="#222" strokeWidth="3" /><path d="M7.500 18.500h9" stroke="#ddd" strokeWidth="2.300" strokeDasharray="2.200 1" /></>,
  sdoc: <><path d="M9 1.500h7l6 6V19H9z" fill="#6d6e70" /><path d="M16 1.500v6h6z" fill="#bbb" /><path d="M1.500 2.500h7l7 7V23h-14z" fill="#a3a4a6" /><path d="M8.500 2.500v7.500h7.500" stroke="#333" strokeWidth="1" /></>,
  sdown: <><circle cx="12" cy="12" r="11" fill="#98999b" stroke="#b0b1b3" /><path d="M9.500 6h5v6h4L12 18.500 5.500 12h4z" fill="#2f3133" /></>,
  sfold: <><path d="M0 3.500h7l2 1.500h15v2.500H0z" fill="#7d7e80" /><path d="M0 8.500h24v12H0z" fill="#98999b" /></>,
  scloud: <path d="M5.500 19a5 5 0 0 1-.8-9.900C4.700 6 8 4.600 10 6.200 12 2 18.500 3.200 18.500 8.500 25 8.500 25.500 19 18.500 19z" fill="#98999b" />,
  susb: <><path d="M4 1.500h16l2 18.500v3H2v-3z" fill="#98999b" /><path d="M3 18.500h18v3.500H3z" fill="#555" stroke="#b5b5b5" strokeWidth=".9" /></>,
};
const Ico = ({ n, c = "w-12 h-12" }: { n: string; c?: string }) => <I c={c}>{icons[n]}</I>;

/* ---------- toolbar ---------- */
const Grip = ({ first = false }: { first?: boolean }) => (
  <div className={`flex h-full items-center justify-end ${first ? "w-[25px] pr-[5px]" : "w-8 border-l-2 border-[#2d2d2d] pr-[5px]"}`}>
    <div className="grid grid-cols-2 gap-x-[3px] gap-y-[3px]">
      {Array.from({ length: 12 }, (_, i) => <span key={i} className="h-[3px] w-[4px] bg-[#777]" />)}
    </div>
  </div>
);
const Down = () => (
  <div className="flex w-6 items-center justify-center">
    <span className="h-0 w-0 border-x-[7px] border-t-[8px] border-x-transparent border-t-[#b8b8b8]" />
  </div>
);
const Toolbar = ({ items, h }: { items: string[]; h: string }) => (
  <div className={`flex items-stretch border-b-2 border-t-2 border-b-[#2a2a2a] border-t-[#6e6e6e] bg-gradient-to-b from-[#373737] to-[#303030] pb-[2px] ${h}`}>
    {items.map((n, i) =>
      n === "|" ? <Grip key={i} first={i === 0} /> : n === "v" ? <Down key={i} /> : (
        <div key={i} className="flex w-[66px] items-center justify-center">
          {n === "hand" ? (
            <div className="flex h-[62px] w-[62px] items-center justify-center rounded-md border-2 border-[#262626] bg-[#454545]"><Ico n={n} /></div>
          ) : n === "pencils" ? (
            <div className="relative h-12 w-12"><Ico n={n} /><span className="absolute left-[37px] top-[43px] h-0 w-0 border-x-[6px] border-t-[7px] border-x-transparent border-t-[#b8b8b8]" /></div>
          ) : <Ico n={n} />}
        </div>
      )
    )}
  </div>
);

/* ---------- menu bar ---------- */
const MenuBar = () => (
  <div className="flex h-[45px] items-center bg-gradient-to-r from-[#22304f] to-[#181d2c] text-[27.5px] tracking-[-0.012em] text-white">
    <div className="w-[108px] pl-[41px]">
      <svg viewBox="0 0 28 32" className="h-[32px] w-[28px]" fill="#fff"><path d="M19 1c.3 3.500-2.600 6.800-5.800 6.600C12.900 4.200 16 1.200 19 1zM26.500 11.300c-4.800 3-3.800 9 .9 10.800-1.100 3.200-3.900 8.600-7 8.700-2 0-2.900-1.200-5.400-1.200s-3.400 1.200-5.300 1.200C6 31 1 23.500 1 17.300c0-6.200 4-9.500 7.700-9.500 2.500 0 4.500 1.500 5.900 1.500 1.500 0 3.800-1.700 6.700-1.600 1.300.1 3.700.5 5.200 3.600z" /></svg>
    </div>
    <div className="w-[107px] font-bold">QGIS</div>
    <div className="w-[128px]">Project</div>
    <div className="w-[87px]">Edit</div>
    <div className="w-[100px]">View</div>
    <div className="w-[107px]">Layer</div>
    <div className="w-[144px]">Settings</div>
    <div className="w-[133px]">Plugins</div>
    <div className="w-[121px]">Vector</div>
    <div className="w-[121px]">Raster</div>
    <div className="w-[160px]">Database</div>
    <div className="w-[94px]">Web</div>
    <div className="w-[182px]">Processing</div>
    <div className="w-[139px]">Window</div>
    <div className="w-[80px]">Help</div>
    <div className="ml-auto flex items-center pr-[46px]">
      <svg viewBox="0 0 36 28" className="mr-[21px] h-7 w-9" fill="none"><path d="M12 26H2V2h32v24h-7" stroke="#fff" strokeWidth="3.500" strokeLinejoin="round" /><path d="M13 28V16q0-5 3.500-5t3.500 5v12M20 22q0-4 2.500-4t2.500 4v6" stroke="#fff" strokeWidth="2" /></svg>
      <I c="w-[38px] h-[34px] mr-[22px]"><DropboxG f="#fff" /></I>
      <svg viewBox="0 0 36 30" className="mr-[21px] h-[30px] w-9" fill="#fff"><path d="M0 15h28q-1-4 1-6 2 2 2 4.500 3-1 5 0-1 3-6 3.500Q26 30 13 30 0 30 0 15zM2 10h4v4H2zM7 10h4v4H7zM12 10h4v4h-4zM17 10h4v4h-4zM22 10h4v4h-4zM7 5h4v4H7zM12 5h4v4h-4zM17 5h4v4h-4zM17 0h4v4h-4z" /></svg>
      <svg viewBox="0 0 42 32" className="mr-[19px] h-8 w-[42px]" fill="#fff"><path d="M21 1c9 0 14 6 14 13 0 4 1 6 4 8 4 3 2 9-4 9H7c-6 0-8-6-4-9 3-2 4-4 4-8C7 7 12 1 21 1z" /></svg>
      <svg viewBox="0 0 42 30" className="mr-[22px] h-[30px] w-[42px]" fill="none" stroke="#fff" strokeWidth="3.600"><path d="M2 11Q11 2 21 2t19 9M8.500 17Q14 11 21 11t12.500 6M14.500 23q3-3.500 6.500-3.500t6.500 3.500" /><path d="M21 30l-4-4q4-3 8 0z" fill="#fff" stroke="none" /></svg>
      <span className="w-[58px] text-[24px] tracking-[-0.04em]">72%</span>
      <svg viewBox="0 0 46 24" className="mr-[38px] h-6 w-[46px]" fill="none"><rect x="1.500" y="1.500" width="38" height="21" rx="4" stroke="#fff" strokeWidth="2.500" /><rect x="5" y="4.500" width="23" height="15" fill="#fff" /><path d="M42 8q4 0 4 4t-4 4z" fill="#fff" /></svg>
      <svg viewBox="0 0 29 29" className="mr-[35px] h-[29px] w-[29px]" fill="none" stroke="#fff" strokeWidth="2.800"><circle cx="11.500" cy="11.500" r="9.500" /><path d="M18.500 18.500L28 28" /></svg>
      <div className="mr-6 flex h-8 w-8 items-center justify-center rounded-full border-2 border-[#ccc] bg-gradient-to-br from-[#c850a0] via-[#5a4a90] to-[#1d5bb4]">
        <svg viewBox="0 0 24 24" className="h-6 w-6" fill="none" stroke="#b8f0f0" strokeWidth="1.300"><path d="M12 12l9 3M12 12L19 5M12 12l2 10M12 12L4 18M12 12L8 4" /><circle cx="12" cy="12" r="2.500" fill="#e8ffff" stroke="none" /></svg>
      </div>
      <svg viewBox="0 0 36 20" className="h-5 w-9" stroke="#fff" strokeWidth="3.800"><path d="M0 2h5M9 2h27M0 10h5M9 10h22M0 18h5M9 18h27" /></svg>
    </div>
  </div>
);

/* ---------- docks ---------- */
const DockTitle = ({ t }: { t: string }) => (
  <div className="flex h-8 items-center pl-[7px] pr-[3px] text-[22px] text-[#dcdcdc]">
    <span className="grow">{t}</span>
    <svg viewBox="0 0 22 22" className="mr-[5px] h-[22px] w-[22px]" fill="none" stroke="#8a8a80" strokeWidth="1.500"><rect x="1" y="1" width="20" height="20" rx="2" /><path d="M5 9h7v8H5zM9 9V5h8v8h-5" /></svg>
    <svg viewBox="0 0 22 22" className="h-[22px] w-[22px]" fill="none" stroke="#8a8a80" strokeWidth="1.500"><rect x="1" y="1" width="20" height="20" rx="2" /><path d="M6 6l10 10M16 6L6 16" strokeWidth="3" /></svg>
  </div>
);
const tree: [string, string, boolean?][] = [
  ["star", "Favorites"], ["home", "Home", true], ["folder", "/", true], ["folder", "/Volumes", true],
  ["gpkg", "GeoPackage"], ["feather", "SpatiaLite"], ["pg", "PostGIS"], ["sail", "MSSQL"], ["db2s", "DB2"],
  ["wms", "WMS/WMTS"], ["wms", "XYZ Tiles", true], ["wcs", "WCS"], ["wfs", "WFS"], ["ows", "OWS"],
  ["arcm", "ArcGisMapServer"], ["arcf", "ArcGisFeatureServer"], ["node", "GeoNode"],
];
const LeftDock = () => (
  <div className="flex w-[602px] shrink-0 border-r-2 border-[#262626] bg-[#323232] pl-[2px]">
    <div className="flex w-[585px] flex-col">
      <div className="h-[1px]" />
      <DockTitle t="Browser" />
      <div className="flex h-[66px] items-center gap-[18px] pl-[14px] pb-[1px]">
        {["addlayer", "refresh", "filter", "collapse", "info"].map((n) => <Ico key={n} n={n} c="w-8 h-8" />)}
      </div>
      <div className="h-[957px] border-y border-r-2 border-[#292929] bg-[#1e1e1e]">
        {tree.map(([n, t, a]) => (
          <div key={t} className="flex h-9 items-center pb-[1px] text-[25.5px] tracking-[-0.002em] text-white">
            <div className="w-[46px] pl-[17px]">{a && <span className="block h-0 w-0 border-y-[8px] border-l-[8px] border-y-transparent border-l-[#a5a5a5]" />}</div>
            <Ico n={n} c="w-8 h-8" />
            <span className="pl-[12px]">{t}</span>
          </div>
        ))}
      </div>
      <div className="flex h-[17px] items-center justify-center gap-[2px]">
        {Array.from({ length: 6 }, (_, i) => <span key={i} className="h-1 w-1 bg-[#777]" />)}
      </div>
      <DockTitle t="Layers" />
      <div className="flex h-[64px] items-center pl-[14px]">
        <Ico n="brush" c="w-8 h-8 mr-[18px]" /><Ico n="group" c="w-8 h-8 mr-[18px]" /><Ico n="eye" c="w-8 h-8 mr-[18px]" />
        <Ico n="filter" c="w-8 h-8 mr-[20px]" /><Ico n="eps" c="w-8 h-8 mr-[10px]" />
        <span className="mr-[14px] h-0 w-0 border-x-[8px] border-t-[8px] border-x-transparent border-t-[#b8b8b8]" />
        <Ico n="expand" c="w-8 h-8 mr-[18px]" /><Ico n="collapse" c="w-8 h-8 mr-[18px]" /><Ico n="remove" c="w-8 h-8" />
      </div>
      <div className="grow border-r-2 border-t-2 border-[#292929] bg-[#1e1e1e]">
        <div className="flex h-9 items-center bg-[#444]">
          <div className="ml-[46px] flex h-7 w-7 items-center justify-center border-2 border-[#2b2b2b] bg-[#1e1e1e]">
            <svg viewBox="0 0 20 20" className="h-5 w-5" fill="none" stroke="#bbb" strokeWidth="2.500"><path d="M3 11l5 6L16 2" /></svg>
          </div>
          <div className="ml-3 h-8 w-[31px] border-2 border-[#4f7a68] bg-[#658c79]" />
          <span className="pl-[13px] text-[25.5px] font-bold tracking-[0.013em] text-white underline decoration-2 underline-offset-4">protected_areas</span>
        </div>
      </div>
    </div>
    <div className="flex grow flex-col gap-[2px] pl-[10px] pt-[955px]">
      {Array.from({ length: 6 }, (_, i) => <span key={i} className="h-1 w-[3px] bg-[#777]" />)}
    </div>
  </div>
);

/* ---------- map ---------- */
const MapView = () => (
  <svg viewBox="602 248 2982 1930" className="h-[1930px] w-[2982px] shrink-0 bg-white" fill="#729b6f" stroke="#232323" strokeWidth="2" strokeLinejoin="round">
    <path d="M722 415L828 294 852 313 1020 316 1157 354 1180 310 1242 360 1256 372 1500 560 1100 700 773 462 760 455z" />
    <path d="M2700 706L2773 712 3449 762 2788 858 3421 993 3171 1108 3322 1221 2936 1213 2928 1242 2896 1244 2853 1230 2800 1231 2791 1232 2787 1246 2700 1246z" />
    <path vectorEffect="non-scaling-stroke" transform="translate(2440 1600) scale(.67602 .35714)" d="M885 80L898 100 938 156 990 210 1042 245 1095 264 1135 270 1272 274 1332 267 1354 286 1392 356 1403 364 1414 364 1434 351 1450 347 1477 360 1435 424 1420 563 1512 732 1494 792 1448 890 1419 903 1406 962 1405 1008 1395 1050 1145 1156 1128 1198 1137 1304 1088 1364 1062 1323 916 1419 890 1490 846 1448 776 1356 760 1346 747 1331 737 1355 732 1343 704 1320 644 1327 628 1326 616 1320 583 1281 543 1227 535 1200 534 1166 547 1110 600 1030 578 1000 547 967 470 930 440 934 422 950 381 951 369 915 348 930 325 938 324 978 322 1003 313 1040 243 1138 190 1189 163 1210 149 1211 79 1155 70 1133 65 1104 66 1084 74 1018 82 976 97 928 102 866 97 822 90 796 79 769 135 667 185 555 218 484 238 473 264 423 280 415 321 416 327 386 367 273 451 337 480 322 621 94 690 90 735 90 883 343 847 411 862 431 935 300 970 341 1004 317 957 262 961 251 877 153 894 110 884 88z" />
  </svg>
);

/* ---------- status bar ---------- */
const Spin = () => (
  <div className="ml-auto flex w-[27px] flex-col items-center justify-center gap-[10px] self-stretch bg-[#454545]">
    <span className="h-0 w-0 border-x-[7px] border-b-[8px] border-x-transparent border-b-[#b8b8b8]" />
    <span className="h-0 w-0 border-x-[7px] border-t-[8px] border-x-transparent border-t-[#b8b8b8]" />
  </div>
);
const StatusBar = () => (
  <div className="flex h-[62px] items-center border-b-2 border-t-2 border-b-[#5c5c5c] border-t-[#262626] bg-[#323232] pl-[9px] pt-[3px] text-[22.5px] tracking-[-0.01em] text-[#ececec]">
    <div className="flex h-12 w-[427px] items-center rounded border-2 border-[#292929] bg-[#1e1e1e] pl-[15px] text-[26px] text-[#8e8e8e]">
      <svg viewBox="0 0 24 24" className="mr-[16px] h-6 w-6" fill="none" stroke="#8e8e8e" strokeWidth="2.200"><circle cx="9" cy="9" r="7.500" /><path d="M14.500 14.500L23 23" /></svg>
      Type to locate (⌘K)
    </div>
    <span className="ml-[1426px] w-[123px]">Coordinate</span>
    <div className="flex h-[44px] w-[211px] items-center rounded bg-[#1e1e1e] pl-[11px] text-white">20.2225,-33.9106</div>
    <svg viewBox="0 0 32 34" className="ml-[9px] mr-[25px] h-[34px] w-8"><g fill="#111" stroke="#ddd" strokeWidth="1.500"><ellipse cx="10" cy="10" rx="5" ry="8" transform="rotate(-15 9 9)" /><ellipse cx="19" cy="24" rx="6" ry="8" transform="rotate(-25 19 24)" /></g><path d="M9 4l3 11M17 19l4 8" stroke="#ddd" strokeWidth="2" /><path d="M1 22l4 3M25 4l3 4" stroke="#111" strokeWidth="2" /></svg>
    <span className="w-[65px]">Scale</span>
    <div className="flex h-[46px] w-[186px] items-center rounded border-2 border-[#494949] bg-[#1e1e1e] pl-[7px] text-white">1:83812
      <div className="ml-auto flex w-[37px] items-center justify-center self-stretch bg-[#484848]"><span className="h-0 w-0 border-x-[7px] border-t-[8px] border-x-transparent border-t-[#151515]" /></div>
    </div>
    <svg viewBox="0 0 26 30" className="ml-6 mr-[17px] h-[30px] w-[26px]" fill="none"><path d="M6 14V8q0-6 7-6t7 6v6" stroke="#bbb" strokeWidth="3" /><rect x="1" y="13" width="24" height="17" rx="3" fill="#8c8c8c" /></svg>
    <span className="w-[105px]">Magnifier</span>
    <div className="flex h-[44px] w-[188px] items-center rounded border border-[#3c3c3c] bg-[#1e1e1e] pl-[9px] text-white">100%<Spin /></div>
    <span className="ml-[19px] w-[105px]">Rotation</span>
    <div className="flex h-[44px] w-[182px] items-center rounded border border-[#3c3c3c] bg-[#1e1e1e] pl-[10px] text-white">0.0 °<Spin /></div>
    <div className="ml-[13px] flex h-[28px] w-[26px] items-center justify-center bg-[#222]">
      <svg viewBox="0 0 20 20" className="h-5 w-5" fill="none" stroke="#ccc" strokeWidth="2.300"><path d="M3 11l5 6L16 2" /></svg>
    </div>
    <span className="ml-[12px] w-[106px]">Render</span>
    <svg viewBox="0 0 30 28" className="h-7 w-[30px]" fill="#aaa" stroke="#333" strokeWidth="1.300"><circle cx="15" cy="14" r="13.500" /><path fill="none" d="M2 14h26M4 7.500h22M4 20.500h22M15 1v26" /><ellipse fill="none" cx="15" cy="14" rx="7" ry="13" /></svg>
    <span className="ml-[5px] w-[167px] text-[#ccc]">EPSG:4326</span>
    <svg viewBox="0 0 31 30" className="h-[30px] w-[31px]" fill="#7a7a7a"><path d="M15 0c9 0 15 5 15 12 0 5-2 8-4 10l3 7-8-5C8 26 0 21 0 12 0 5 6 0 15 0z" /></svg>
  </div>
);

/* ---------- data source manager ---------- */
const sources: [string, string][] = [
  ["dbrowser", "Browser"], ["dvector", "Vector"], ["draster", "Raster"], ["dmesh", "Mesh"], ["ddelim", "Delimited Text"],
  ["dgpkg", "GeoPackage"], ["dfeather", "SpatiaLite"], ["dpg", "PostgreSQL"], ["dsail", "MSSQL"], ["ddb2", "DB2"],
  ["dvirt", "Virtual Layer"], ["dwms", "WMS/WMTS"], ["dwcs", "WCS"], ["dwfs", "WFS"], ["darcm", "ArcGIS Map Server"],
  ["darcf", "ArcGIS Feature Server"], ["dnode", "GeoNode"],
];
const QBtn = ({ children, c = "" }: P & { c?: string }) => (
  <div className={`flex h-[46px] items-center justify-center rounded-[5px] border-2 bg-gradient-to-b text-[26px] tracking-[-0.02em] text-[#e6e6e6] ${c}`}>{children}</div>
);
const DataSourceManager = () => (
  <div className="absolute left-[771px] top-[437px] flex h-[1246px] w-[2002px] flex-col overflow-hidden rounded-[10px] border-2 border-[#5c5c5c] bg-[#323232] shadow-[0_28px_60px_10px_rgba(0,0,0,0.5),0_0_0_1px_#000]">
    <div className="flex h-[43px] shrink-0 items-center gap-4 border-b-2 border-black bg-[#2a2b2c] pl-[15px]">
      {[0, 1, 2].map((i) => <span key={i} className="h-6 w-6 rounded-full bg-[#4e4f50]" />)}
    </div>
    <div className="flex min-h-0 grow">
      <div className="w-[515px] shrink-0 overflow-hidden bg-[#434343] pt-[1px]">
        {sources.map(([n, t]) => (
          <div key={t} className={`flex h-[72px] items-center text-[25px] tracking-[-0.026em] ${t === "Vector" ? "bg-[#323232] pl-[11px] text-black" : "pl-[5px] text-white"}`}>
            <Ico n={n} c="w-14 h-14" />
            <span className="pl-[12px]">{t}</span>
          </div>
        ))}
      </div>
      <div className="flex w-[27px] shrink-0 flex-col bg-[#393939]">
        <div className="h-[1103px] border-2 border-[#555] bg-[#434343]" />
        <div className="mt-auto flex h-[27px] items-center justify-center border-2 border-[#555] bg-[#434343]"><span className="h-0 w-0 border-x-[8px] border-t-[8px] border-x-transparent border-t-[#b8b8b8]" /></div>
      </div>
      <div className="flex grow flex-col pb-[28px] pl-[32px] pr-[27px]">
        <div className="mt-[68px] flex h-[193px] items-start justify-end rounded border-2 border-[#3c3c3c] pr-[27px] pt-[117px]">
          <div className="flex h-[46px] w-[900px] items-center justify-end rounded-[5px] border-2 border-[#555] bg-gradient-to-b from-[#444] to-[#383838] pr-[12px]"><span className="h-0 w-0 border-x-[8px] border-t-[8px] border-x-transparent border-t-[#151515]" /></div>
        </div>
        <div className="mt-[53px] flex h-[102px] items-center justify-end rounded border-2 border-[#3c3c3c] pb-1 pr-[27px]">
          <div className="flex h-[46px] w-[1000px] items-center justify-end rounded bg-[#1e1e1e] pr-[17px] text-[25px] text-[#eee]">rivers.shp
            <svg viewBox="0 0 26 20" className="ml-[14px] h-5 w-[26px]"><path d="M0 10L8 0h18v20H8z" fill="#a5a5a5" /><path d="M10 4.500l11 11M21 4.500l-11 11" stroke="#1e1e1e" strokeWidth="2" /></svg>
          </div>
          <div className="ml-[13px] flex h-9 w-[45px] items-center justify-center rounded-[4px] border-2 border-[#555] bg-[#424242] text-[22px] text-[#eee]">...</div>
        </div>
        <div className="mt-auto flex pr-[2px]">
          <QBtn c="w-[158px] border-[#4e4e4e] from-[#444] to-[#383838]">Help</QBtn>
          <QBtn c="ml-auto w-[161px] border-[#5a9ae6] from-[#525862] to-[#43484f]"><span><u className="underline-offset-4">A</u>dd</span></QBtn>
          <QBtn c="ml-[14px] w-[157px] border-[#4e4e4e] from-[#444] to-[#383838]">Close</QBtn>
        </div>
      </div>
    </div>
  </div>
);

/* ---------- open-file panel ---------- */
const FilePage = ({ shp }: { shp: boolean }) =>
  shp ? (
    <svg viewBox="0 0 28 32" className="h-8 w-7 shrink-0 -translate-x-[3px]"><path d="M2 1.500h17l7 7V31H2z" fill="#f6f6f6" /><path d="M19 1.500v7h7z" fill="#bbb" /><path d="M0 3h18v7H0z" fill="#55a630" /><text x="3" y="9" fontSize="6.500" fontWeight="700" fontFamily="Noto Sans" fill="#fff">SHP</text><path d="M7.500 15L12.500 26 17.500 15h5" fill="none" stroke="#465b75" strokeWidth="1.700" /><g fill="#465b75"><circle cx="7.500" cy="15" r="2" /><circle cx="12.500" cy="26" r="2" /><circle cx="17.500" cy="15" r="2" /><circle cx="22.500" cy="15" r="2" /></g></svg>
  ) : (
    <svg viewBox="0 0 22 29" className="mr-[5px] ml-[1px] h-[29px] w-[22px] shrink-0"><path d="M0 0h14l8 9v20H0z" fill="#fff" /><path d="M14 0v7l8 2z" fill="#ddd" /></svg>
  );
const files = ["places.cpg", "places.dbf", "places.prj", "places.qpj", "places.shp", "places.shx", "protected_areas.dbf", "protected_areas.prj", "protected_areas.qpj", "protected_areas.shp", "protected_areas.shx", "rivers.cpg", "rivers.dbf", "rivers.prj", "rivers.qpj", "rivers.shp", "rivers.shx", "water.cpg", "water.dbf"];
const Side = ({ n, t, children }: P & { n: string; t: string }) => (
  <div className="flex h-[52px] items-center pl-[35px] text-[26px] font-medium tracking-[-0.025em] text-white"><Ico n={n} c="w-9 h-9" /><span className="pl-[8px]">{t}</span>{children}</div>
);
const Head = ({ children }: P) => <div className="flex h-[38px] items-center pl-[18px] text-[22px] font-medium tracking-[-0.005em] text-[#9b9c9e]">{children}</div>;
const btn = "flex items-center justify-center rounded-[7px] bg-[#636465] shadow-[inset_0_1px_0_#848484]";
const Btn2 = ({ children, c = "bg-[#646464]" }: P & { c?: string }) => <div className={`flex h-[38px] items-center justify-center rounded-[6px] text-[26px] tracking-[-0.01em] text-[#e8e8e8] shadow-[inset_0_1px_0_#858585] ${c}`}>{children}</div>;
const UpDown = () => <svg viewBox="0 0 16 26" className="h-[26px] w-4" fill="none" stroke="#eee" strokeWidth="2.600" strokeLinecap="round" strokeLinejoin="round"><path d="M2 9l6-7 6 7M2 17l6 7 6-7" /></svg>;
const OpenPanel = () => (
  <div className="absolute left-[991px] top-[371px] flex h-[898px] w-[1600px] flex-col overflow-hidden rounded-[10px] border-2 border-[#5a5b5c] bg-[#2a2a2a] shadow-[0_36px_80px_16px_rgba(0,0,0,0.55),0_0_0_1px_#000]">
    <div className="flex h-[84px] shrink-0 items-center bg-gradient-to-b from-[#3e3f41] to-[#343536] pb-[3px] pl-[21px] pr-[21px]">
      <div className={`${btn} h-[44px] w-[50px]`}><svg viewBox="0 0 14 24" className="h-6 w-[14px]" fill="none" stroke="#999" strokeWidth="2.500"><path d="M12 2L2 12l10 10" /></svg></div>
      <div className={`${btn} ml-[2px] h-[44px] w-[50px]`}><svg viewBox="0 0 14 24" className="h-6 w-[14px]" fill="none" stroke="#999" strokeWidth="2.500"><path d="M2 2l10 10L2 22" /></svg></div>
      <div className={`${btn} ml-4 h-[44px] w-[88px]`}><svg viewBox="0 0 56 22" className="h-[22px] w-14" fill="none" stroke="#e8e8e8" strokeWidth="2"><path d="M1 1h31v20H1zM11.500 1v20M21.500 1v20" /><path d="M42 8l6 6 6-6" strokeWidth="3" /></svg></div>
      <div className={`${btn} ml-3 h-[44px] w-[88px]`}><svg viewBox="0 0 36 26" className="h-[26px] w-9" fill="#e8e8e8"><path d="M1 1h10l3 3h10v3H1zM1 8.500h24q0 6 6 6v9q0 2-2 2H3q-2 0-2-2z" /><path d="M30 3v12M24 9h12" stroke="#e8e8e8" strokeWidth="2.500" /></svg></div>
      <div className={`${btn} ml-[264px] h-[44px] w-[414px] !justify-start pl-[13px] pr-[6px]`}>
        <svg viewBox="0 0 30 24" className="h-6 w-[30px]"><path d="M0 2q0-2 2-2h8l2 3h16q2 0 2 2v4H0z" fill="#4b98c4" /><path d="M0 6h30v16q0 2-2 2H2q-2 0-2-2z" fill="#6cb5e0" /></svg>
        <span className="grow pl-[9px] text-[26px] tracking-[-0.02em] text-[#eee]">shapefile</span><span className="-translate-x-[3px]"><UpDown /></span>
      </div>
      <div className={`${btn} ml-auto h-[44px] w-[436px] !justify-start pl-[10px] text-[26px] tracking-[-0.02em] text-[#929292]`}>
        <svg viewBox="0 0 25 25" className="mr-[11px] h-[25px] w-[25px]" fill="none" stroke="#ddd" strokeWidth="2.300"><circle cx="10.500" cy="10.500" r="8.800" /><path d="M17 17l7.500 7.500" /></svg>Search
      </div>
    </div>
    <div className="flex h-[659px] shrink-0">
      <div className="w-[311px] shrink-0 overflow-hidden border-r-2 border-t-2 border-r-black border-t-[#464748] bg-[#333436]">
        <div className="h-[7px]" />
        <Head>Favorites</Head>
        <Side n="sdrop" t="Dropbox" /><Side n="srec" t="Recents" /><Side n="sapp" t="Applications" /><Side n="sdesk" t="Desktop" /><Side n="sdoc" t="Documents" /><Side n="sdown" t="Downloads" /><Side n="sfold" t="bin" />
        <div className="h-[20px]" />
        <Head>iCloud</Head>
        <Side n="scloud" t="iCloud Drive" />
        <div className="h-[20px]" />
        <Head>Locations</Head>
        <Side n="susb" t="rey_usb"><svg viewBox="0 0 16 18" className="ml-auto mr-[32px] h-[18px] w-4" fill="#bbb"><path d="M8 0l8 11H0zM0 13.500h16V18H0z" /></svg></Side>
      </div>
      <div className="w-[410px] shrink-0 overflow-hidden border-r-2 border-black bg-[#1e1e20] text-[24px] tracking-[-0.008em] text-[#dedede]">
        <div className="-mt-[1px]">
          {files.map((f) => (
            <div key={f} className={`flex h-9 items-center border-t-2 border-[#1e1e20] pl-4 ${f === "rivers.shp" ? "bg-[#205cca] text-white" : ""}`}>
              <FilePage shp={f.endsWith(".shp")} />
              <span className="pb-[2px] pl-[8px]">{f}</span>
            </div>
          ))}
        </div>
      </div>
      <div className="flex grow flex-col overflow-hidden bg-[#1e1e20] pl-[40px] pr-[41px]">
        <svg viewBox="1980 480 330 400" className="ml-[226px] mt-[23px] h-[400px] w-[330px] shrink-0" fill="none">
          <defs>
            <linearGradient id="gr" x1="0" y1="0" x2="0" y2="1"><stop offset="0" stopColor="#4b942a" /><stop offset="1" stopColor="#93c84e" /></linearGradient>
            <linearGradient id="pg" x1="0" y1="0" x2="0" y2="1"><stop offset=".5" stopColor="#fff" /><stop offset="1" stopColor="#f0f0f0" /></linearGradient>
            <linearGradient id="fd" x1="0" y1="1" x2="1" y2="0"><stop offset="0" stopColor="#fff" /><stop offset="1" stopColor="#aaa" /></linearGradient>
            <filter id="sh" x="-20%" y="-20%" width="150%" height="150%"><feDropShadow dx="8" dy="12" stdDeviation="7" floodOpacity=".4" /></filter>
            <filter id="s2" x="-20%" y="-20%" width="150%" height="150%"><feDropShadow dx="3" dy="3" stdDeviation="2" floodOpacity=".5" /></filter>
          </defs>
          <path d="M2014 502H2208L2286 583V860H2014z" fill="url(#pg)" stroke="#999" strokeWidth="2" />
          <path d="M2208 502Q2222 530 2219 566 2260 562 2286 583z" fill="url(#fd)" stroke="#888" strokeWidth="1.500" />
          <path d="M2219 566Q2260 562 2286 583" stroke="#888" strokeWidth="3" />
          <g filter="url(#s2)"><rect x="1989" y="524.500" width="202" height="70" fill="url(#gr)" stroke="#2e6a12" strokeWidth="3" /></g>
          <text x="2092.500" y="580" textAnchor="middle" fontFamily="Noto Sans" fontWeight="700" fontSize="58" textLength="132" lengthAdjust="spacingAndGlyphs" fill="#fff">SHP</text>
          <g filter="url(#sh)" stroke="#465b75">
            <path d="M2071 667L2126.500 792 2184.700 668H2236" strokeWidth="11" />
            <g fill="#eeeee9" strokeWidth="11"><circle cx="2071" cy="667" r="14.500" /><circle cx="2184.700" cy="668" r="14.500" /><circle cx="2236" cy="668" r="14.500" /></g>
            <circle cx="2126.500" cy="792" r="14.500" fill="#eeeee9" strokeWidth="15" />
          </g>
        </svg>
        <div className="mt-[44px] h-[44px] shrink-0 text-[32px] font-semibold leading-[44px] tracking-[-0.01em] text-[#e2e2e2]">rivers.shp</div>
        <div className="mt-[5px] h-10 shrink-0 text-[24px] leading-[36px] tracking-[-0.004em] text-[#9b9b9c]">ESRI Shape document - 72 KB</div>
        <div className="mt-[5px] h-[3px] shrink-0 bg-[#4e4e50]" />
        <div className="mt-[12px] h-[38px] shrink-0 text-[28px] font-bold leading-[38px] tracking-[-0.01em] text-[#e2e2e2]">Information</div>
        <div className="mt-[17px] flex justify-between text-[24px] leading-[34px] tracking-[0.004em] text-[#e2e2e2]"><span className="text-[#9b9b9c]">Created</span><span>Monday, February 11, 2019 at 3:58 AM</span></div>
      </div>
    </div>
    <div className="flex h-[69px] shrink-0 items-start border-t-2 border-[#464646] bg-[#2a2a2a] pl-[554px] pt-[10px]">
      <Btn2 c="bg-[#606060] w-[486px] !justify-start pl-[16px] overflow-hidden text-[25px]"><span className="grow">All files (*)</span><span className="flex h-[38px] w-8 items-center justify-center bg-[#2563d4]"><UpDown /></span></Btn2>
    </div>
    <div className="flex grow items-center border-t-2 border-[#414141] bg-[#2e2e2e] pb-[2px] pl-[21px] pr-[21px]">
      <Btn2 c="w-[190px] bg-[#646464]">New Folder</Btn2>
      <Btn2 c="ml-5 w-[164px] bg-[#646464]">Options</Btn2>
      <Btn2 c="ml-auto w-[152px] bg-[#646464]">Cancel</Btn2>
      <Btn2 c="ml-5 w-[152px] bg-[#2865dc]">Open</Btn2>
    </div>
  </div>
);

const tb1 = "| new open save saveas layout layoutmgr style | hand pan zin zout z11 zfull zsel zlay zlast znext mapnew bmnew bm refresh | identify action v select v form v desel table abacus gear sigma ruler v tip textan v".split(" ");
const tb2 = "| ds gpkgnew vnew feathernew virtnew | pencils pencil saveedit poly nodes v multi trash cut copy paste undo redo | label diagram tagon tag1 tag2 tag3 tag4 tag5 | meta | python | help |".split(" ");

export default function App() {
  return (
    <div className="relative flex h-[2240px] w-[3584px] flex-col overflow-hidden bg-[#0a0f1e] font-['Inter',sans-serif] whitespace-nowrap">
      <MenuBar />
      <div className="relative flex h-[44px] items-center justify-center rounded-t-[10px] border-t-2 border-[#77787a] bg-gradient-to-b from-[#434446] to-[#37383a] pr-[2px] text-[26px] tracking-[-0.01em] text-[#b4b5b6]">
        <div className="absolute left-4 flex gap-4">{[0, 1, 2].map((i) => <span key={i} className="h-6 w-6 rounded-full bg-[#5a5a5b]" />)}</div>
        *Untitled Project - QGIS
      </div>
      <Toolbar items={tb1} h="h-[79px]" />
      <Toolbar items={tb2} h="h-[78px]" />
      <div className="h-[2px] bg-[#262626]" />
      <div className="flex h-[1930px] bg-[#323232]">
        <LeftDock />
        <MapView />
      </div>
      <StatusBar />
      <DataSourceManager />
      <OpenPanel />
    </div>
  );
}
